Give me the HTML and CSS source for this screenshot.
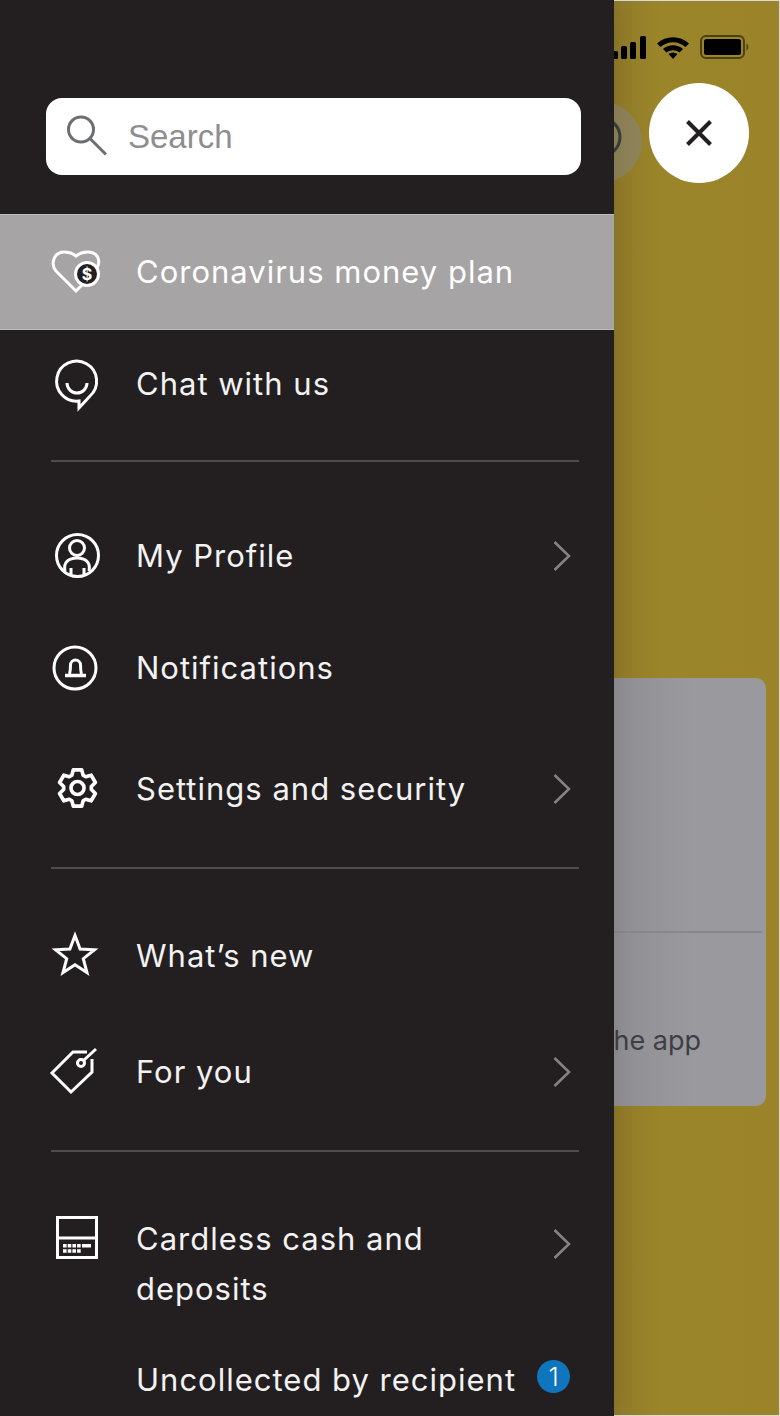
FILE: index.html
```html
<!DOCTYPE html>
<html lang="en">
<head>
    <meta charset="UTF-8">
    <meta name="viewport" content="width=device-width, initial-scale=1.0">
    <title>Menu</title>
    <link rel="stylesheet" href="styles.css">
</head>
<body>
    <div class="screen">
        <div class="backdrop">
            <div class="status">
                <svg class="signal" width="36" height="24" viewBox="0 0 36 24">
                    <rect x="1" y="16" width="6" height="8" rx="1.5"/>
                    <rect x="10" y="11" width="6" height="13" rx="1.5"/>
                    <rect x="19" y="7" width="6" height="17" rx="1.5"/>
                    <rect x="29" y="1" width="6" height="23" rx="1.5"/>
                </svg>
                <svg class="wifi" width="34" height="24" viewBox="0 0 34 24">
                    <path d="M1 8.5 C10 0 24 0 33 8.5 L29.5 12 C22 5.5 12 5.5 4.500 12 Z"/>
                    <path d="M7 14 C12.500 9 21.500 9 27 14 L23.500 17.500 C19.500 14.500 14.500 14.500 10.500 17.500 Z"/>
                    <path d="M12.500 19 C15.500 17 18.500 17 21.500 19 L17 24 Z"/>
                </svg>
                <svg class="battery" width="50" height="24" viewBox="0 0 50 24">
                    <rect x="1" y="1" width="43" height="22" rx="5" fill="none" stroke="#4d4018" stroke-width="2"/>
                    <rect x="4" y="4" width="37" height="16" rx="2.500" fill="#000"/>
                    <path d="M46.500 8.500 C49 9.500 49 14.500 46.500 15.500 Z" fill="#4d4018"/>
                </svg>
            </div>
            <div class="float-row">
                <div class="ghost-btn">
                    <svg width="44" height="44" viewBox="0 0 44 44"><circle cx="21" cy="17" r="19" fill="none" stroke="#3d3d3d" stroke-width="3"/></svg>
                </div>
                <button class="close-btn" aria-label="Close">
                    <svg width="28" height="28" viewBox="0 0 28 28"><path d="M2.500 2.500 L25.500 25.500 M25.500 2.500 L2.500 25.500" stroke="#231f20" stroke-width="4" fill="none"/></svg>
                </button>
            </div>
            <div class="card">
                <div class="card-top"></div>
                <div class="card-bottom">Move money in the app</div>
            </div>
        </div>

        <aside class="drawer">
            <div class="search">
                <svg width="44" height="44" viewBox="0 0 44 44"><circle cx="15" cy="14.500" r="12.500" fill="none" stroke="#6d6e71" stroke-width="3"/><path d="M24 23.500 L40 39.500" stroke="#6d6e71" stroke-width="3" fill="none"/></svg>
                <span>Search</span>
            </div>

            <a class="row row-active">
                <svg class="icon" viewBox="0 0 60 60">
                    <path d="M29 49 L9 29 C3 22 7 10 17 10 C22 10 26 11.500 29 14 C32 11.500 36 10 41 10 C51 10 54 19 50 26 L47 31 L29 49 Z"/>
                    <circle cx="40" cy="32" r="13" fill="#fff" stroke="none"/>
                    <circle cx="40" cy="32" r="10" fill="#231f20" stroke="none"/>
                    <text class="dollar" x="40" y="37.500">$</text>
                </svg>
                <span class="label">Coronavirus money plan</span>
            </a>
            <a class="row row-chat">
                <svg class="icon" viewBox="0 0 60 60">
                    <path d="M32 54 V47 A20 20 0 1 1 43 42 Z"/>
                    <path d="M20 29 A10 10 0 0 0 40 29"/>
                </svg>
                <span class="label">Chat with us</span>
            </a>
            <hr class="rule rule-first">

            <a class="row row-profile">
                <svg class="icon" viewBox="0 0 60 60">
                    <circle cx="30.500" cy="29.500" r="21"/>
                    <circle cx="30" cy="22" r="7.500"/>
                    <path d="M18 45 C16 36 22 32 30 32 C38 32 44 36 42 45"/>
                    <path d="M24 42 V48 M37 42 V48"/>
                </svg>
                <span class="label">My Profile</span>
                <svg class="chevron" width="20" height="32" viewBox="0 0 20 32"><path d="M2.500 2 L17 16 L2.500 30"/></svg>
            </a>
            <a class="row">
                <svg class="icon" viewBox="0 0 60 60">
                    <circle cx="28" cy="30" r="21"/>
                    <path d="M22.500 36 C23.500 33 23.500 31 23.500 27 A5 5 0 0 1 33.500 27 C33.500 31 33.500 33 34.500 36"/>
                    <path d="M18 37.500 H39" stroke-width="3.500"/>
                </svg>
                <span class="label">Notifications</span>
            </a>
            <a class="row row-settings">
                <svg class="icon" viewBox="0 0 60 60">
                    <g class="gear" transform="translate(30.500 29) scale(0.87)">
                        <polygon points="-6.500,-14.600 -4.800,-20.900 4.800,-20.900 6.500,-14.600 9.400,-12.900 15.700,-14.700 20.600,-6.300 15.900,-1.700 15.900,1.700 20.600,6.300 15.700,14.700 9.400,12.900 6.500,14.600 4.800,20.900 -4.800,20.900 -6.500,14.600 -9.400,12.900 -15.700,14.700 -20.600,6.300 -15.900,1.700 -15.900,-1.700 -20.600,-6.300 -15.700,-14.700 -9.400,-12.900"/>
                        <circle r="7.500"/>
                    </g>
                </svg>
                <span class="label">Settings and security</span>
                <svg class="chevron" width="20" height="32" viewBox="0 0 20 32"><path d="M2.500 2 L17 16 L2.500 30"/></svg>
            </a>
            <hr class="rule">

            <a class="row row-whatsnew">
                <svg class="icon" viewBox="0 0 60 60">
                    <polygon points="28,9.500 33.100,23 47.500,23.700 36.300,32.700 40,46.600 28,38.700 16,46.600 19.700,32.700 8.500,23.700 22.900,23"/>
                </svg>
                <span class="label">What’s new</span>
            </a>
            <a class="row row-foryou">
                <svg class="icon" viewBox="0 0 60 60">
                    <path d="M40 10 H26 L5 31 L24 50 L45 30 V17"/>
                    <circle cx="34" cy="21" r="3.500"/>
                    <path d="M36.500 18.500 L49 7"/>
                </svg>
                <span class="label">For you</span>
                <svg class="chevron" width="20" height="32" viewBox="0 0 20 32"><path d="M2.500 2 L17 16 L2.500 30"/></svg>
            </a>
            <hr class="rule">

            <a class="row row-tall">
                <svg class="icon" viewBox="0 0 60 60">
                    <rect x="10.500" y="10.500" width="39" height="40"/>
                    <path d="M10.500 31 H49.500"/>
                    <path class="keys" d="M16 37 h3.600 v3.500 h-3.600 z M20.700 37 h3.600 v3.500 h-3.600 z M25.400 37 h3.600 v3.500 h-3.600 z M30.100 37 h3.600 v3.500 h-3.600 z M35 37 h9 v3.500 h-9 z M16 42.200 h3.600 v3.500 h-3.600 z M20.700 42.200 h3.600 v3.500 h-3.600 z M25.400 42.200 h3.600 v3.500 h-3.600 z M30.100 42.200 h3.600 v3.500 h-3.600 z"/>
                </svg>
                <span>Cardless cash and<br>deposits</span>
                <svg class="chevron" width="20" height="32" viewBox="0 0 20 32"><path d="M2.500 2 L17 16 L2.500 30"/></svg>
            </a>
            <a class="row row-plain">
                <span class="label">Uncollected by recipient</span>
                <span class="badge">1</span>
            </a>
        </aside>
    </div>
</body>
</html>
```

FILE: styles.css
```css
* {
    box-sizing: border-box;
}
body {
    margin: 0;
    padding: 0;
    background: #fff;
}
.screen {
    position: relative;
    width: 780px;
    height: 1416px;
    overflow: hidden;
    outline: 1px solid #d9d9d9;
    outline-offset: -1px;
}

/* page behind the menu */
.backdrop {
    display: flex;
    flex-direction: column;
    align-items: flex-end;
    height: 100%;
    padding-top: 35px;
    background: linear-gradient(90deg, #8f7a29 614px, #9b852a 660px, #9a8328 100%);
}
.status {
    display: flex;
    align-items: center;
    gap: 9px;
    height: 24px;
    padding-right: 30px;
}
.status .wifi {
    margin-right: 1px;
}
.float-row {
    display: flex;
    align-items: flex-start;
    gap: 7px;
    margin-top: 24px;
    padding-right: 31px;
}
.ghost-btn {
    display: flex;
    align-items: center;
    justify-content: center;
    width: 80px;
    height: 80px;
    margin-top: 19px;
    border-radius: 50%;
    background: #8e8258;
}
.close-btn {
    display: flex;
    align-items: center;
    justify-content: center;
    width: 100px;
    height: 100px;
    padding: 0;
    border: 0;
    border-radius: 50%;
    background: #fff;
}
.card {
    display: flex;
    flex-direction: column;
    width: 366px;
    height: 428px;
    margin-top: 495px;
    margin-right: 14px;
    border-radius: 10px;
    background: linear-gradient(90deg, #8f8e92 58%, #9a999e 80%);
}
.card-top {
    height: 255px;
    margin-right: 4px;
    border-bottom: 2px solid #88878b;
}
.card-bottom {
    flex: 1;
    display: flex;
    align-items: center;
    justify-content: flex-end;
    padding: 41px 65px 0 0;
    font-family: Inter, sans-serif;
    font-size: 27px;
    color: #3f3e45;
    white-space: nowrap;
}

/* menu drawer */
.drawer {
    position: absolute;
    top: 0;
    left: 0;
    bottom: 0;
    width: 614px;
    padding-top: 98px;
    background: #231f20;
    box-shadow: 0 0 24px rgba(0, 0, 0, 0.1);
    font-family: Inter, sans-serif;
    font-size: 31px;
    letter-spacing: 1px;
    color: #f2f2f2;
}
.search {
    display: flex;
    align-items: center;
    gap: 18px;
    width: 535px;
    height: 77px;
    margin: 0 0 39px 46px;
    padding-left: 20px;
    border-radius: 16px;
    background: #fff;
    font-family: "Liberation Sans", Arial, sans-serif;
    font-size: 33px;
    letter-spacing: 0;
    color: #8e8e8e;
}
.row {
    display: flex;
    align-items: center;
    height: 112px;
    padding: 0 42px 0 47px;
}
.label {
    margin-bottom: 2px;
}
.row .chevron {
    margin-left: auto;
    fill: none;
    stroke: #858384;
    stroke-width: 2.5;
}
.icon {
    flex: none;
    width: 60px;
    height: 60px;
    margin-right: 29px;
    fill: none;
    stroke: #fff;
    stroke-width: 3;
}
.gear {
    stroke-width: 4.2;
    stroke-linejoin: round;
}
.row-active {
    height: 116px;
    border-top: 1px solid #bdbbbc;
    border-bottom: 1px solid #bdbbbc;
    background: #a6a4a5;
    color: #fff;
}
.dollar {
    font-family: Inter, sans-serif;
    font-size: 16px;
    font-weight: 700;
    letter-spacing: 0;
    text-anchor: middle;
    fill: #fff;
    stroke: none;
}
.keys {
    fill: #fff;
    stroke: none;
}
.row-chat {
    height: 108px;
}
.row-profile {
    margin-top: 38px;
}
.row-settings {
    margin-top: 9px;
}
.row-whatsnew {
    margin-top: 31px;
}
.row-foryou {
    margin-top: 4px;
}
.row-tall {
    align-items: flex-start;
    height: 100px;
    margin-top: 62px;
    line-height: 50px;
}
.row-tall .icon {
    margin-top: -7px;
}
.row-tall .chevron {
    margin-top: 14px;
}
.row-plain {
    height: 60px;
    margin-top: 36px;
    padding-left: 136px;
}
.badge {
    display: flex;
    align-items: center;
    justify-content: center;
    width: 33px;
    height: 33px;
    margin: -8px 0 0 21px;
    border-radius: 50%;
    background: #0f75bc;
    font-size: 26px;
    font-weight: 300;
    letter-spacing: 0;
    color: #fff;
}
.rule {
    height: 2px;
    margin: 22px 35px 0 51px;
    border: 0;
    background: #4f4c4d;
}
```
